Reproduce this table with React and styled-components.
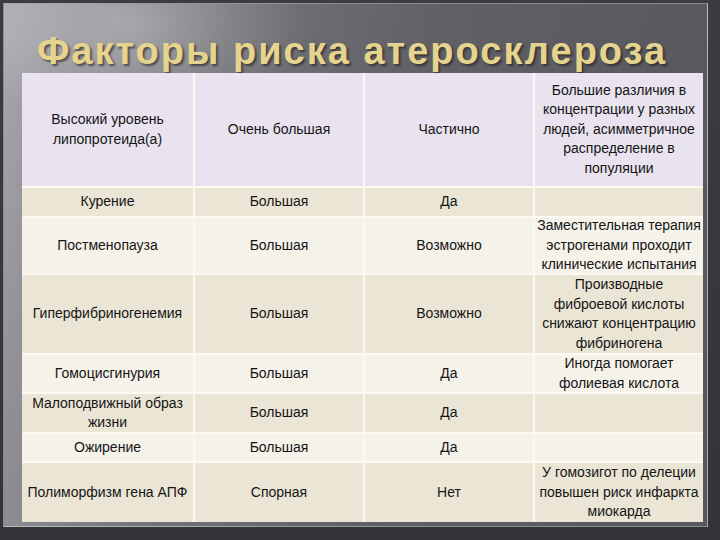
import React from "react";
import styled, { createGlobalStyle } from "styled-components";

const Global = createGlobalStyle`
  html, body {
    margin: 0;
    padding: 0;
    background: #3a3a3f;
  }
`;

const Screen = styled.div`
  width: 720px;
  height: 540px;
  box-sizing: border-box;
  padding: 3px 12px 13px 3px;
  background: linear-gradient(180deg, #3b3b40 0%, #333338 100%);
  overflow: hidden;
`;

const Slide = styled.div`
  height: 100%;
  box-sizing: border-box;
  border: 1px solid rgba(200, 200, 210, 0.45);
  padding: 27px 0 0 18px;
  background:
    radial-gradient(ellipse 260px 140px at 120px 20px, rgba(255,255,255,0.28), rgba(255,255,255,0) 70%),
    linear-gradient(100deg, #a9a9af 0%, #8e8e94 10%, #727278 30%, #606066 55%, #56565c 100%);
`;

const Title = styled.h1`
  margin: 0;
  width: 660px;
  height: 42px;
  text-align: center;
  font-family: "Liberation Sans", Arial, sans-serif;
  font-weight: bold;
  font-size: 38px;
  line-height: 40px;
  letter-spacing: 2px;
  color: #e5d38e;
  text-shadow: 2px 2px 2px rgba(30, 30, 30, 0.6);
  position: relative;
  z-index: 0;
`;

const Table = styled.div`
  position: relative;
  z-index: 1;
  width: 681px;
  display: grid;
  grid-template-columns: 171px 168px 168px 168px;
  grid-template-rows: 113px 28px 55px 78px 37px 38px 27px 59px;
  gap: 2px;
  background: #fbf9f2;
  font-family: "Liberation Sans", Arial, sans-serif;
  font-size: 14px;
  line-height: 19.5px;
  color: #151515;
`;

const Cell = styled.div`
  display: flex;
  flex-direction: column;
  align-items: center;
  justify-content: center;
  text-align: center;
  background: ${p => p.$bg};
  white-space: nowrap;
`;

const HEAD = "#e8e3ef";
const DARK = "#ebe5d5";
const LIGHT = "#f5f2ea";

const rows = [
  {
    bg: HEAD,
    cells: [["Высокий уровень", "липопротеида(а)"], ["Очень большая"], ["Частично"],
      ["Большие различия в", "концентрации у разных", "людей, асимметричное", "распределение в", "популяции"]],
  },
  { bg: DARK, cells: [["Курение"], ["Большая"], ["Да"], []] },
  {
    bg: LIGHT,
    cells: [["Постменопауза"], ["Большая"], ["Возможно"],
      ["Заместительная терапия", "эстрогенами проходит", "клинические испытания"]],
  },
  {
    bg: DARK,
    cells: [["Гиперфибриногенемия"], ["Большая"], ["Возможно"],
      ["Производные", "фиброевой кислоты", "снижают концентрацию", "фибриногена"]],
  },
  { bg: LIGHT, cells: [["Гомоцисгинурия"], ["Большая"], ["Да"], ["Иногда помогает", "фолиевая кислота"]] },
  { bg: DARK, cells: [["Малоподвижный образ", "жизни"], ["Большая"], ["Да"], []] },
  { bg: LIGHT, cells: [["Ожирение"], ["Большая"], ["Да"], []] },
  {
    bg: DARK,
    cells: [["Полиморфизм гена АПФ"], ["Спорная"], ["Нет"],
      ["У гомозигот по делеции", "повышен риск инфаркта", "миокарда"]],
  },
];

export default function App() {
  return (
    <>
      <Global />
      <Screen>
        <Slide>
          <Title>Факторы риска атеросклероза</Title>
          <Table>
            {rows.map((row, i) =>
              row.cells.map((lines, j) => (
                <Cell key={`${i}-${j}`} $bg={row.bg}>
                  {lines.map(line => (
                    <span key={line}>{line}</span>
                  ))}
                </Cell>
              ))
            )}
          </Table>
        </Slide>
      </Screen>
    </>
  );
}
